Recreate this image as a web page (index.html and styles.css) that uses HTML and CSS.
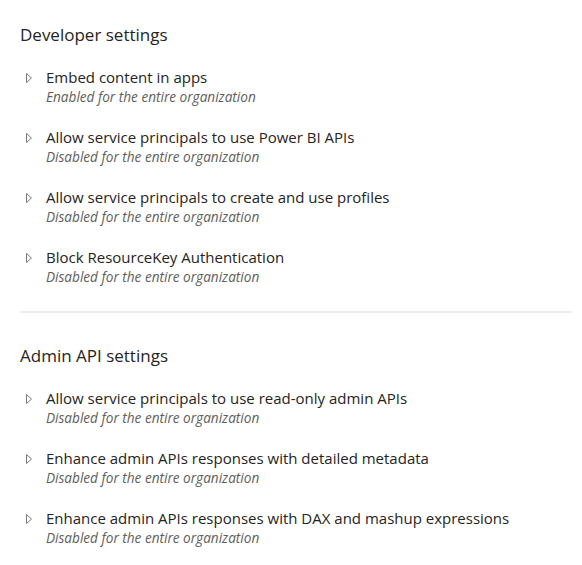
FILE: index.html
```html
<!DOCTYPE html>
<html>
<head>
<meta charset="utf-8">
<link rel="stylesheet" href="styles.css">
</head>
<body>
<div class="page">
  <section class="group">
    <h2 class="group-title">Developer settings</h2>
    <ul class="items">
      <li class="item">
        <svg class="chev" width="8" height="12" viewBox="0 0 8 12"><path d="M1.5 1.5 L6.5 6 L1.5 10.5 Z" fill="none" stroke="#7a7a7a" stroke-width="1" stroke-linejoin="round"/></svg>
        <div class="text"><div class="name">Embed content in apps</div><div class="status">Enabled for the entire organization</div></div>
      </li>
      <li class="item">
        <svg class="chev" width="8" height="12" viewBox="0 0 8 12"><path d="M1.5 1.5 L6.5 6 L1.5 10.5 Z" fill="none" stroke="#7a7a7a" stroke-width="1" stroke-linejoin="round"/></svg>
        <div class="text"><div class="name">Allow service principals to use Power BI APIs</div><div class="status">Disabled for the entire organization</div></div>
      </li>
      <li class="item">
        <svg class="chev" width="8" height="12" viewBox="0 0 8 12"><path d="M1.5 1.5 L6.5 6 L1.5 10.5 Z" fill="none" stroke="#7a7a7a" stroke-width="1" stroke-linejoin="round"/></svg>
        <div class="text"><div class="name">Allow service principals to create and use profiles</div><div class="status">Disabled for the entire organization</div></div>
      </li>
      <li class="item">
        <svg class="chev" width="8" height="12" viewBox="0 0 8 12"><path d="M1.5 1.5 L6.5 6 L1.5 10.5 Z" fill="none" stroke="#7a7a7a" stroke-width="1" stroke-linejoin="round"/></svg>
        <div class="text"><div class="name">Block ResourceKey Authentication</div><div class="status">Disabled for the entire organization</div></div>
      </li>
    </ul>
  </section>
  <hr class="divider">
  <section class="group">
    <h2 class="group-title">Admin API settings</h2>
    <ul class="items">
      <li class="item">
        <svg class="chev" width="8" height="12" viewBox="0 0 8 12"><path d="M1.5 1.5 L6.5 6 L1.5 10.5 Z" fill="none" stroke="#7a7a7a" stroke-width="1" stroke-linejoin="round"/></svg>
        <div class="text"><div class="name">Allow service principals to use read-only admin APIs</div><div class="status">Disabled for the entire organization</div></div>
      </li>
      <li class="item">
        <svg class="chev" width="8" height="12" viewBox="0 0 8 12"><path d="M1.5 1.5 L6.5 6 L1.5 10.5 Z" fill="none" stroke="#7a7a7a" stroke-width="1" stroke-linejoin="round"/></svg>
        <div class="text"><div class="name">Enhance admin APIs responses with detailed metadata</div><div class="status">Disabled for the entire organization</div></div>
      </li>
      <li class="item">
        <svg class="chev" width="8" height="12" viewBox="0 0 8 12"><path d="M1.5 1.5 L6.5 6 L1.5 10.5 Z" fill="none" stroke="#7a7a7a" stroke-width="1" stroke-linejoin="round"/></svg>
        <div class="text"><div class="name">Enhance admin APIs responses with DAX and mashup expressions</div><div class="status">Disabled for the entire organization</div></div>
      </li>
    </ul>
  </section>
</div>
</body>
</html>
```
FILE: styles.css
```css
html, body {
  margin: 0;
  padding: 0;
  background: #ffffff;
}
body {
  font-family: "Open Sans", "Noto Sans", sans-serif;
  color: #252423;
}
.page {
  padding: 22px 10px 0 20px;
}
.group-title {
  margin: 0;
  font-size: 17px;
  font-weight: 400;
  line-height: 26px;
  color: #252423;
}
.items {
  list-style: none;
  margin: 19px 0 0 0;
  padding: 0;
}
.item {
  display: flex;
  align-items: flex-start;
  height: 60px;
}
.chev {
  margin: 5px 0 0 5px;
  flex: none;
}
.text {
  margin-left: 13px;
}
.name {
  font-size: 15px;
  line-height: 20px;
  color: #252423;
}
.status {
  font-size: 13.6px;
  font-style: italic;
  line-height: 20px;
  color: #605e5c;
}
.divider {
  border: 0;
  height: 2px;
  background: #edebe9;
  margin: 4px 0 30px 0;
}
```
